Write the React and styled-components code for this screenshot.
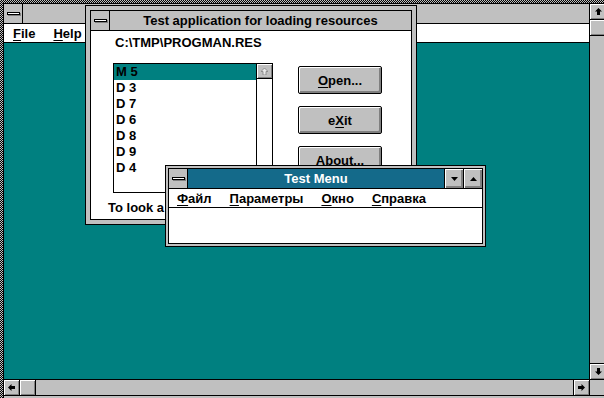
import React from 'react'
import styled, { createGlobalStyle } from 'styled-components'

const FACE = '#c0c0c0'
const SHADOW = '#808080'
const TEAL = '#008080'
const CAPTION = '#146a8a'

const checker = (a, b) => `repeating-conic-gradient(${a} 0 25%, ${b} 0 50%) 0 0 / 2px 2px`

const GlobalStyle = createGlobalStyle`
  html, body {
    margin: 0;
    padding: 0;
    background: ${FACE};
  }
  body {
    font-family: "Liberation Sans", Arial, sans-serif;
    font-weight: 700;
    font-size: 13px;
    color: #000;
  }
`

function Arrow({ dir = 'up', color = '#000', edge }) {
  const rot = { up: 0, right: 90, down: 180, left: 270 }[dir]
  return (
    <ArrowSvg width="7" height="7" viewBox="0 0 7 7" style={{ transform: `rotate(${rot}deg)` }}>
      <polygon points="3.5,0 7,3.5 5,3.5 5,7 2,7 2,3.5 0,3.5" fill={color} stroke={edge || 'none'} strokeWidth={edge ? 0.8 : 0} />
    </ArrowSvg>
  )
}

function Triangle({ down }) {
  return (
    <svg width="7" height="4" viewBox="0 0 7 4">
      <polygon points={down ? '0,0 7,0 3.5,4' : '0,4 7,4 3.5,0'} fill="#000" />
    </svg>
  )
}

function App() {
  return (
    <>
      <GlobalStyle />
      <Screen>
        <MainWindow>
          <MainRow>
            <LeftCol>
              <TitleBar>
                <SysBox><SysBar /></SysBox>
              </TitleBar>
              <MenuBar $indent={9} $gap={18}>
                <span><u>F</u>ile</span>
                <span><u>H</u>elp</span>
              </MenuBar>
              <Desktop />
              <HScroll>
                <ScrollBtn $side="right"><Arrow dir="left" /></ScrollBtn>
                <Thumb $side="right" />
                <Track />
                <ScrollBtn $side="left"><Arrow dir="right" /></ScrollBtn>
              </HScroll>
            </LeftCol>
            <RightCol>
              <VScroll>
                <VBtn $side="bottom"><Arrow dir="up" /></VBtn>
                <VThumb />
                <Track />
                <VBtn $side="top"><Arrow dir="down" /></VBtn>
              </VScroll>
              <Corner />
            </RightCol>
          </MainRow>
          <BottomFrame />
        </MainWindow>

        <Dialog>
          <DialogBody>
            <TitleBar>
              <SysBox><SysBar /></SysBox>
              <Caption>Test application for loading resources</Caption>
            </TitleBar>
            <PathText>C:\TMP\PROGMAN.RES</PathText>
            <DialogRow>
              <ListBox>
                <ListItems>
                  {['M 5', 'D 3', 'D 7', 'D 6', 'D 8', 'D 9', 'D 4'].map((item, i) => (
                    <ListRow key={item} $selected={i === 0}>{item}</ListRow>
                  ))}
                </ListItems>
                <ListScroll>
                  <ListArrow><Arrow dir="up" color="#e8e8e8" edge={SHADOW} /></ListArrow>
                </ListScroll>
              </ListBox>
              <ButtonColumn>
                <PushButton><u>O</u>pen...</PushButton>
                <PushButton>e<u>X</u>it</PushButton>
                <PushButton>About...</PushButton>
              </ButtonColumn>
            </DialogRow>
            <Hint>To look a</Hint>
          </DialogBody>
        </Dialog>

        <AppWindow>
          <WindowBody>
            <TitleBar $active>
              <SysBox><SysBar /></SysBox>
              <Caption $active>Test Menu</Caption>
              <CapButton><Triangle down /></CapButton>
              <CapButton><Triangle /></CapButton>
            </TitleBar>
            <MenuBar $indent={8} $gap={18}>
              <span><u>Ф</u>айл</span>
              <span><u>П</u>араметры</span>
              <span><u>О</u>кно</span>
              <span><u>С</u>правка</span>
            </MenuBar>
            <Client />
          </WindowBody>
        </AppWindow>
      </Screen>
    </>
  )
}

export default App

const Screen = styled.div`
  position: relative;
  width: 604px;
  height: 398px;
  overflow: hidden;
  box-sizing: border-box;
  padding: 3px 0 0 3px;
  background: ${checker('#000', FACE)};
`

const MainWindow = styled.div`
  width: 603px;
  height: 100%;
  box-sizing: border-box;
  display: flex;
  flex-direction: column;
  background: ${FACE};
  border-top: 1px solid #000;
  border-left: 1px solid #000;
`

const MainRow = styled.div`
  flex: 1;
  min-height: 0;
  display: flex;
  border-bottom: 1px solid #000;
`

const BottomFrame = styled.div`
  height: 2px;
  background: ${FACE};
`

const LeftCol = styled.div`
  flex: 1;
  display: flex;
  flex-direction: column;
`

const RightCol = styled.div`
  width: 16px;
  border-left: 1px solid #000;
  display: flex;
  flex-direction: column;
`

const TitleBar = styled.div`
  height: 19px;
  flex: none;
  display: flex;
  align-items: stretch;
  background: ${p => (p.$active ? CAPTION : FACE)};
  border-bottom: 1px solid #000;
`

const SysBox = styled.div`
  width: 18px;
  flex: none;
  border-right: 1px solid #000;
  background: ${FACE};
  display: flex;
  align-items: center;
  justify-content: center;
`

const SysBar = styled.span`
  width: 11px;
  height: 1px;
  background: #fff;
  border: 1px solid #000;
  box-shadow: 1px 1px 0 ${SHADOW};
`

const Caption = styled.div`
  flex: 1;
  text-align: center;
  line-height: 19px;
  white-space: nowrap;
  color: ${p => (p.$active ? '#fff' : '#000')};
`

const CapButton = styled.div`
  width: 18px;
  flex: none;
  border-left: 1px solid #000;
  background: ${FACE};
  box-shadow: inset 1px 1px 0 #fff, inset -2px -2px 0 ${SHADOW};
  display: flex;
  align-items: center;
  justify-content: center;
`

const MenuBar = styled.div`
  height: 18px;
  flex: none;
  display: flex;
  align-items: center;
  gap: ${p => p.$gap}px;
  padding-left: ${p => p.$indent}px;
  background: #fff;
  border-bottom: 1px solid #000;
  white-space: nowrap;

  u {
    text-decoration-thickness: 1px;
    text-underline-offset: 2px;
  }
`

const Desktop = styled.div`
  flex: 1;
  background: ${TEAL};
`

const HScroll = styled.div`
  height: 15px;
  flex: none;
  display: flex;
  border-top: 1px solid #000;
  background: ${FACE};
`

const ScrollBtn = styled.div`
  width: 15px;
  flex: none;
  ${p => `border-${p.$side}: 1px solid #000;`}
  background: ${FACE};
  box-shadow: inset 1px 1px 0 #fff, inset -1px -1px 0 ${SHADOW};
  display: flex;
  align-items: center;
  justify-content: center;
`

const Thumb = styled(ScrollBtn)``

const Track = styled.div`
  flex: 1;
  background: ${FACE};
`

const VScroll = styled.div`
  flex: 1;
  display: flex;
  flex-direction: column;
  background: ${FACE};
`

const VBtn = styled.div`
  height: 15px;
  flex: none;
  ${p => `border-${p.$side}: 1px solid #000;`}
  background: ${FACE};
  box-shadow: inset 1px 1px 0 #fff, inset -1px -1px 0 ${SHADOW};
  display: flex;
  align-items: center;
  justify-content: center;
`

const VThumb = styled(VBtn).attrs({ $side: 'bottom' })``

const Corner = styled.div`
  height: 15px;
  border-top: 1px solid #000;
  background: ${FACE};
`

const ArrowSvg = styled.svg`
  display: block;
`

const Dialog = styled.div`
  position: absolute;
  left: 85px;
  top: 5px;
  width: 332px;
  height: 220px;
  box-sizing: border-box;
  border: 1px solid #000;
  padding: 4px;
  background: ${FACE};
`

const DialogBody = styled.div`
  height: 100%;
  box-sizing: border-box;
  border: 1px solid #000;
  background: #fff;
  display: flex;
  flex-direction: column;
  overflow: hidden;
`

const PathText = styled.div`
  margin-top: 4px;
  padding-left: 24px;
  line-height: 16px;
`

const DialogRow = styled.div`
  margin-top: 12px;
  padding-left: 22px;
  display: flex;
  align-items: flex-start;
  gap: 25px;
`

const ListBox = styled.div`
  width: 160px;
  height: 130px;
  box-sizing: border-box;
  border: 1px solid #000;
  display: flex;
  background: #fff;
`

const ListItems = styled.div`
  flex: 1;
`

const ListRow = styled.div`
  height: 16px;
  line-height: 16px;
  padding-left: 2px;
  background: ${p => (p.$selected ? TEAL : 'transparent')};
`

const ListScroll = styled.div`
  width: 15px;
  border-left: 1px solid #000;
`

const ListArrow = styled.div`
  height: 14px;
  border-bottom: 1px solid #000;
  background: ${FACE};
  box-shadow: inset 1px 1px 0 #fff, inset -1px -1px 0 ${SHADOW};
  display: flex;
  align-items: center;
  justify-content: center;
`

const ButtonColumn = styled.div`
  margin-top: 3px;
  display: flex;
  flex-direction: column;
  gap: 12px;
`

const PushButton = styled.button`
  width: 84px;
  height: 28px;
  box-sizing: border-box;
  padding: 0;
  border: 1px solid #000;
  border-radius: 2px;
  background: ${FACE};
  box-shadow: inset 1px 1px 0 #fff, inset -2px -2px 0 ${SHADOW};
  font: inherit;
  color: #000;

  u {
    text-decoration-thickness: 1px;
    text-underline-offset: 2px;
  }
`

const Hint = styled.div`
  margin-top: 7px;
  padding-left: 17px;
  line-height: 16px;
  white-space: nowrap;
`

const AppWindow = styled.div`
  position: absolute;
  left: 165px;
  top: 165px;
  width: 321px;
  height: 82px;
  box-sizing: border-box;
  border: 1px solid #000;
  padding: 2px;
  background: ${FACE};
`

const WindowBody = styled.div`
  height: 100%;
  box-sizing: border-box;
  border: 1px solid #000;
  display: flex;
  flex-direction: column;
  background: #fff;
`

const Client = styled.div`
  flex: 1;
  background: #fff;
`
